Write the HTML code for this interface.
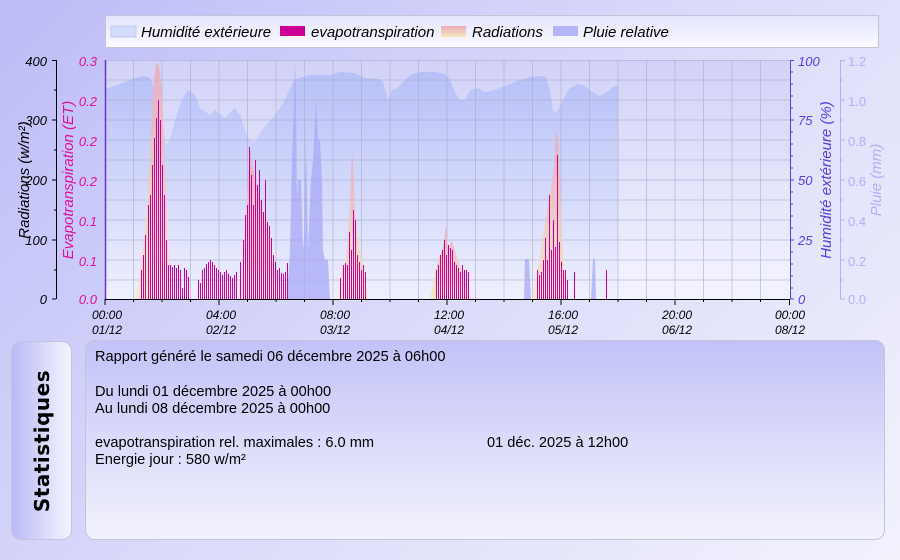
<!DOCTYPE html>
<html><head><meta charset="utf-8"><style>
html,body{margin:0;padding:0}
body{width:900px;height:560px;overflow:hidden;position:relative;background:linear-gradient(135deg,#bcbcf8 0%,#d8d8fa 45%,#f2f2fd 100%);font-family:"Liberation Sans",sans-serif}
svg{position:absolute;left:0;top:0}
.tab{position:absolute;left:11px;top:341px;width:59px;height:197px;border:1px solid #c4c4dc;border-radius:10px;background:linear-gradient(90deg,#babaf6,#f4f4fe)}
.tab span{position:absolute;left:50%;top:50%;transform:translate(-50%,-50%) rotate(-90deg);font:bold 20px "DejaVu Sans",sans-serif;white-space:nowrap;color:#000;letter-spacing:0.5px}
.box{position:absolute;left:85px;top:340px;width:798px;height:198px;border:1px solid #c4c4d8;border-radius:10px;background:linear-gradient(180deg,#c2c2f8 0%,#d6d6fa 40%,#f2f2fd 100%)}
.t{position:absolute;font-size:14.6px;color:#000;white-space:nowrap}
</style></head><body>
<svg width="900" height="560" xmlns="http://www.w3.org/2000/svg" font-family="Liberation Sans, sans-serif">
<defs>
<linearGradient id="pa" x1="0" y1="0" x2="0" y2="1"><stop offset="0" stop-color="#d2d2f8"/><stop offset="1" stop-color="#f4f4ff"/></linearGradient>
<linearGradient id="hu" x1="0" y1="0" x2="0" y2="1"><stop offset="0" stop-color="#b4bef8"/><stop offset="1" stop-color="#eef0fe"/></linearGradient>
<linearGradient id="ra" x1="0" y1="0" x2="0" y2="1"><stop offset="0" stop-color="#eaaabb"/><stop offset="1" stop-color="#f6e8c0"/></linearGradient>
<linearGradient id="lg" x1="0" y1="0" x2="0" y2="1"><stop offset="0" stop-color="#e4e4fc"/><stop offset="1" stop-color="#fafaff"/></linearGradient>
</defs>
<rect x="105.5" y="15.5" width="773" height="32" fill="url(#lg)" stroke="#c4c4d8"/>
<rect x="111" y="26" width="25" height="11" fill="#d4dcfc" stroke="#c0c8f0"/>
<text x="141" y="37" font-size="15" font-style="italic">Humidité extérieure</text>
<rect x="280" y="26" width="25" height="10" fill="#cc0099"/>
<text x="311" y="37" font-size="15" font-style="italic">evapotranspiration</text>
<rect x="441" y="26" width="25" height="11" fill="url(#ra)"/>
<text x="472" y="37" font-size="15" font-style="italic">Radiations</text>
<rect x="553" y="26" width="25" height="10" fill="#b4b4f8"/>
<text x="583" y="37" font-size="15" font-style="italic">Pluie relative</text>
<rect x="105" y="60" width="685" height="239" fill="url(#pa)"/>
<path d="M105 89 L108 88 L115 86 L125 82 L135 78 L142 76 L145 76 L150 78 L155 90 L160 120 L166 145 L170 140 L175 120 L182 100 L188 90 L195 95 L200 108 L210 115 L215 110 L225 118 L235 108 L240 115 L245 130 L250 140 L255 142 L262 130 L268 123 L275 115 L280 108 L285 100 L290 88 L294 80 L300 78 L310 75 L330 75 L340 72 L355 73 L365 78 L378 79 L383 82 L386 92 L388 100 L392 90 L398 88 L405 80 L410 75 L420 72 L435 72 L445 74 L450 80 L455 92 L460 100 L465 100 L470 90 L478 88 L485 92 L495 90 L500 88 L510 84 L520 80 L530 77 L540 76 L546 77 L550 90 L553 110 L556 113 L560 106 L565 96 L570 88 L578 84 L585 86 L592 92 L600 96 L605 93 L610 90 L614 86 L618 86 L618 299 L105 299 Z" fill="url(#hu)" opacity="0.9"/>
<g stroke="#a8a8c4" stroke-opacity="0.55" stroke-width="1">
<path d="M105 80H790M105 100H790M105 120H790M105 140H790M105 160H790M105 180H790M105 200H790M105 220H790M105 240H790M105 260H790M105 280H790M105 60.5H790"/>
<path d="M133.5 60V299M162 60V299M190.5 60V299M219 60V299M247.5 60V299M276 60V299M304.5 60V299M333 60V299M361.5 60V299M390 60V299M418.5 60V299M447 60V299M475.5 60V299M504 60V299M532.5 60V299M561 60V299M589.5 60V299M618 60V299M646.5 60V299M675 60V299M703.5 60V299M732 60V299M760.5 60V299"/>
</g>
<g fill="url(#ra)" opacity="0.85">
<path d="M136 299 L140 270 L144 240 L148 195 L150 150 L152 110 L154 80 L156 65 L158 63 L160 72 L162 95 L164 140 L166 185 L168 240 L170 275 L173 299 Z"/>
<path d="M238 299 L242 270 L244 245 L246 215 L248 180 L250 150 L252 160 L254 175 L257 185 L260 200 L264 215 L268 228 L272 250 L276 285 L278 299 Z"/>
<path d="M338 299 L342 270 L345 262 L348 240 L350 205 L352 150 L354 185 L356 225 L359 248 L362 260 L366 285 L368 299 Z"/>
<path d="M430 299 L434 280 L438 260 L442 250 L444 240 L446 225 L448 248 L452 240 L456 255 L460 265 L464 275 L468 285 L471 299 Z"/>
<path d="M532 299 L536 280 L540 255 L544 230 L548 205 L551 190 L554 165 L556 130 L558 140 L560 175 L562 235 L564 265 L567 299 Z"/>
</g>
<path d="M287 299 L290 250 L292 160 L294 100 L295 60 L296 100 L297 200 L298 180 L301 180 L303 250 L304 240 L305 190 L306 140 L307 190 L308 250 L310 200 L311 180 L313 160 L314 140 L316 100 L318 140 L320 140 L322 180 L323 250 L325 260 L328 260 L330 299 Z M524 299 L525 259 L529 259 L531 299 Z M591 299 L593 259 L595 259 L596 299 Z" fill="#a8a8f6" opacity="0.75"/>
<path transform="translate(0.5,0)" stroke="#cc0099" stroke-width="1" fill="none" d="M141 299V270M143 299V255M145 299V235M148 299V205M150 299V195M152 299V165M154 299V138M156 299V118M158 299V100M160 299V120M162 299V165M164 299V195M166 299V240M168 299V265M170 299V265M172 299V267M174 299V265M176 299V268M178 299V265M180 299V270M182 299V288M184 299V268M186 299V270M188 299V277M198 299V280M200 299V283M202 299V270M204 299V268M206 299V264M208 299V262M210 299V260M212 299V262M214 299V265M216 299V268M218 299V270M220 299V272M222 299V275M224 299V272M226 299V270M228 299V274M230 299V276M232 299V278M234 299V275M236 299V272M240 299V262M243 299V240M245 299V215M247 299V205M249 299V147M251 299V175M253 299V205M255 299V160M257 299V185M259 299V170M261 299V200M263 299V212M265 299V180M267 299V222M269 299V226M271 299V238M273 299V255M275 299V262M277 299V270M279 299V268M281 299V273M283 299V274M285 299V272M287 299V263M340 299V278M343 299V265M345 299V263M347 299V265M349 299V232M351 299V250M353 299V210M355 299V220M357 299V255M359 299V262M361 299V270M363 299V265M365 299V272M436 299V270M438 299V265M440 299V255M442 299V250M444 299V240M446 299V255M448 299V245M450 299V248M452 299V250M454 299V262M456 299V265M458 299V268M460 299V272M462 299V265M464 299V270M466 299V270M468 299V272M537 299V270M539 299V275M541 299V272M543 299V260M545 299V238M547 299V260M549 299V195M551 299V250M553 299V220M555 299V247M557 299V155M559 299V242M561 299V262M563 299V270M565 299V270M567 299V280M574 299V272M606 299V270"/>
<g stroke="#000" stroke-width="1">
<path d="M105 299.5H790"/>
<path d="M56.5 60V299M52 60.5H56M52 120H56M52 180H56M52 240H56M52 299H56M54 90H56M54 150H56M54 210H56M54 270H56"/>
<path d="M105 299V305M219 299V305M333 299V305M447 299V305M561 299V305M675 299V305M789.5 299V305M133.5 299V302M162 299V302M190.5 299V302M247.5 299V302M276 299V302M304.5 299V302M361.5 299V302M390 299V302M418.5 299V302M475.5 299V302M504 299V302M532.5 299V302M589.5 299V302M618 299V302M646.5 299V302M703.5 299V302M732 299V302M760.5 299V302"/>
</g>
<path d="M105.5 60V299" stroke="#7030d0" stroke-width="1.5"/>
<path d="M790.5 60V299M790 60.5H794M790 120H794M790 180H794M790 240H794M790 299H794M790 72H793M790 84H793M790 96H793M790 108H793M790 132H793M790 144H793M790 156H793M790 168H793M790 192H793M790 204H793M790 216H793M790 228H793M790 252H793M790 264H793M790 276H793M790 288H793" stroke="#5a3ee0" stroke-width="1"/>
<path d="M840.5 60V299M840 60.5H845M840 100H845M840 140H845M840 180H845M840 220H845M840 260H845M840 299H845M840 80H843M840 120H843M840 160H843M840 200H843M840 240H843M840 280H843" stroke="#b0b0f6" stroke-width="1"/>
<g font-size="13" font-style="italic" text-anchor="end">
<text x="47" y="66">400</text><text x="47" y="125">300</text><text x="47" y="185">200</text><text x="47" y="245">100</text><text x="47" y="304">0</text>
</g>
<g font-size="13" font-style="italic" text-anchor="end" fill="#dd1199">
<text x="97" y="66">0.3</text><text x="97" y="106">0.2</text><text x="97" y="146">0.2</text><text x="97" y="186">0.2</text><text x="97" y="226">0.1</text><text x="97" y="266">0.1</text><text x="97" y="304">0.0</text>
</g>
<g font-size="13" font-style="italic" fill="#5a3ee0">
<text x="798" y="66">100</text><text x="798" y="125">75</text><text x="798" y="185">50</text><text x="798" y="245">25</text><text x="798" y="304">0</text>
</g>
<g font-size="13" fill="#b0b0f6">
<text x="848" y="66">1.2</text><text x="848" y="106">1.0</text><text x="848" y="146">0.8</text><text x="848" y="186">0.6</text><text x="848" y="226">0.4</text><text x="848" y="266">0.2</text><text x="848" y="304">0.0</text>
</g>
<text transform="translate(29,180) rotate(-90)" font-size="15" font-style="italic" text-anchor="middle">Radiations (w/m²)</text>
<text transform="translate(73,180) rotate(-90)" font-size="15" font-style="italic" text-anchor="middle" fill="#dd1199">Evapotranspiration (ET)</text>
<text transform="translate(831,180) rotate(-90)" font-size="15" font-style="italic" text-anchor="middle" fill="#5a3ee0">Humidité extérieure (%)</text>
<text transform="translate(881,180) rotate(-90)" font-size="15" font-style="italic" text-anchor="middle" fill="#b0b0f6">Pluie (mm)</text>
<g font-size="12" font-style="italic" text-anchor="middle">
<text x="107" y="319">00:00</text><text x="107" y="334">01/12</text>
<text x="221" y="319">04:00</text><text x="221" y="334">02/12</text>
<text x="335" y="319">08:00</text><text x="335" y="334">03/12</text>
<text x="449" y="319">12:00</text><text x="449" y="334">04/12</text>
<text x="563" y="319">16:00</text><text x="563" y="334">05/12</text>
<text x="677" y="319">20:00</text><text x="677" y="334">06/12</text>
<text x="790" y="319">00:00</text><text x="790" y="334">08/12</text>
</g>
</svg>
<div class="tab"><span>Statistiques</span></div>
<div class="box"></div>
<div class="t" style="left:95px;top:349px">Rapport généré le samedi 06 décembre 2025 à 06h00</div>
<div class="t" style="left:95px;top:384px">Du lundi 01 décembre 2025 à 00h00</div>
<div class="t" style="left:95px;top:401px">Au lundi 08 décembre 2025 à 00h00</div>
<div class="t" style="left:95px;top:435px">evapotranspiration rel. maximales : 6.0 mm</div>
<div class="t" style="left:487px;top:435px">01 déc. 2025 à 12h00</div>
<div class="t" style="left:95px;top:452px">Energie jour : 580 w/m²</div>
</body></html>
